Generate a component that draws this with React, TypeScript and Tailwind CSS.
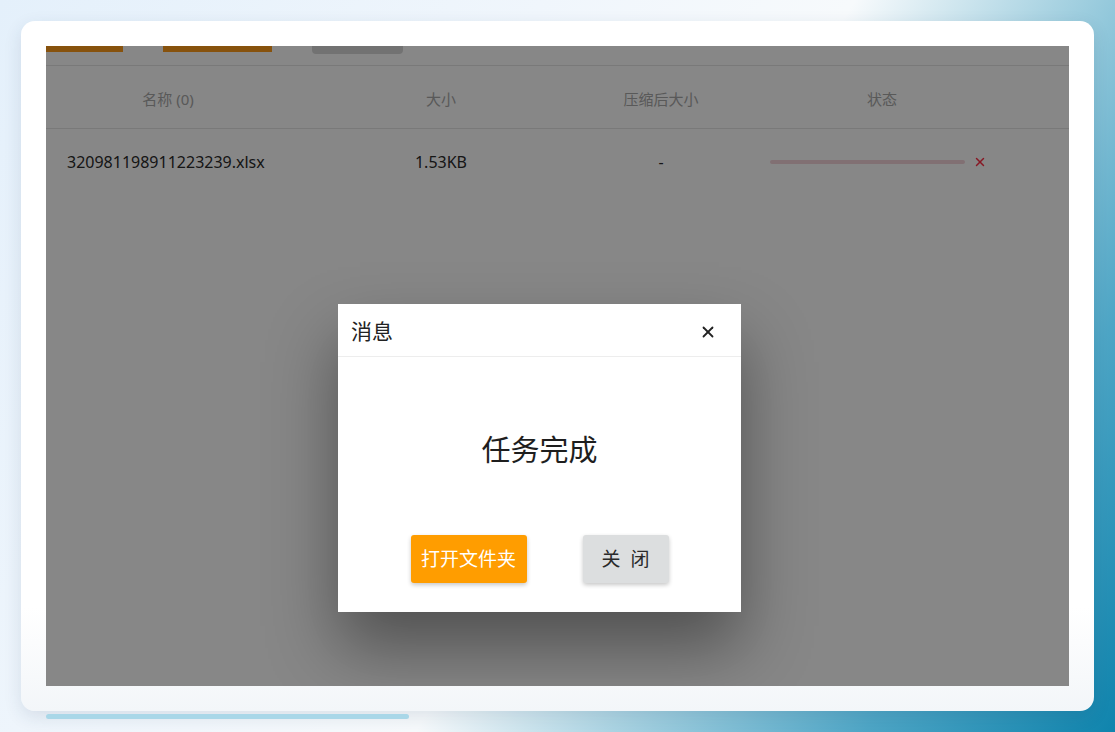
import { X } from "lucide-react"

const font = { fontFamily: '"Noto Sans", "Noto Sans CJK SC", sans-serif' }

function FileTable() {
  return (
    <div className="w-full">
      <div className="flex h-[20px] items-start border-b border-[#e4e4e4]">
        <div className="h-[6px] w-[77px] bg-[#ff9c1a]" />
        <div className="ml-[40px] h-[6px] w-[109px] bg-[#ff9c1a]" />
        <div className="ml-[40px] h-[8px] w-[91px] rounded-b-[4px] bg-[#d8d8d8]" />
      </div>

      <div className="flex h-[63px] items-center border-b border-[#e4e4e4] pt-[4px] text-[15px] text-[#a8a8a8]">
        <div className="w-[244px] text-center">名称 (0)</div>
        <div className="w-[302px] text-center">大小</div>
        <div className="w-[138px] text-center">压缩后大小</div>
        <div className="w-[304px] text-center">状态</div>
      </div>

      <div className="flex h-[66px] items-center text-[16px] text-[#2a2a2a]">
        <div className="w-[244px] pl-[21px]">320981198911223239.xlsx</div>
        <div className="w-[302px] text-center">1.53KB</div>
        <div className="w-[138px] text-center">-</div>
        <div className="flex w-[304px] items-center pl-[40px]">
          <div className="h-[4px] w-[195px] rounded-full bg-[#f4d4da]" />
          <X className="ml-[8px] h-[14px] w-[14px] text-[#ff2f45]" strokeWidth={2.5} />
        </div>
      </div>
    </div>
  )
}

function MessageDialog() {
  return (
    <div className="absolute left-[292px] top-[258px] flex h-[308px] w-[403px] flex-col bg-white shadow-[0_36px_64px_rgba(0,0,0,0.4)]">
      <div className="flex h-[53px] items-center justify-between border-b border-[#ededed] pl-[13px] pr-[24px] pt-[3px]">
        <span className="text-[21px] text-[#222]">消息</span>
        <X className="h-[18px] w-[18px] text-[#222]" strokeWidth={2.4} />
      </div>
      <div className="pt-[73px] text-center text-[29px] leading-[40px] text-[#1e1e1e]">任务完成</div>
      <div className="mt-[65px] flex justify-center gap-[56px]">
        <button className="h-[48px] w-[116px] rounded-[3px] bg-[#ff9d00] text-[19px] text-white shadow-[0_2px_4px_rgba(0,0,0,0.22)]">
          打开文件夹
        </button>
        <button className="h-[48px] w-[86px] rounded-[3px] bg-[#dcdedf] text-[19px] text-[#2a2a2a] shadow-[0_2px_4px_rgba(0,0,0,0.22)]">
          关&nbsp;&nbsp;闭
        </button>
      </div>
    </div>
  )
}

export default function App() {
  return (
    <div
      style={font}
      className="flex h-[732px] w-[1115px] flex-col overflow-hidden bg-[linear-gradient(121deg,#e4f0fb_0%,#f0f6fc_35%,#f7fafc_55%,#a9d3e2_68%,#4ea6c6_84%,#0f84ad_100%)] pl-[21px] pt-[21px]"
    >
      <div className="h-[690px] w-[1073px] rounded-[14px] bg-[linear-gradient(180deg,#ffffff_0%,#ffffff_85%,#f3f6f9_100%)] p-[25px] shadow-[0_6px_18px_rgba(30,60,90,0.12)]">
        <div className="relative h-[640px] w-[1023px] overflow-hidden bg-white">
          <FileTable />
          <div className="absolute inset-0 bg-black/[0.47]" />
          <MessageDialog />
        </div>
      </div>
      <div className="ml-[25px] mt-[3px] h-[5px] w-[363px] rounded-full bg-[#a9d7e8]" />
    </div>
  )
}
